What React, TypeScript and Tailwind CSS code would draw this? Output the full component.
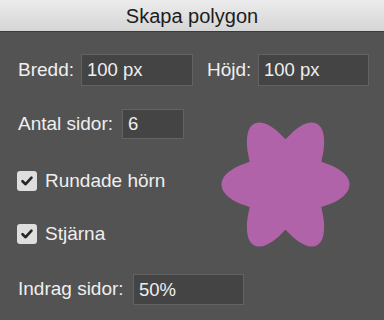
import React from 'react';

const font = { fontFamily: '"Liberation Sans", Arial, sans-serif' };

function Field({ value, className }: { value: string; className: string }) {
  return (
    <div
      className={`flex items-center bg-[#444444] border border-[#636363] pl-[5px] text-[18.5px] text-[#efefef] ${className}`}
    >
      {value}
    </div>
  );
}

function Check({ label }: { label: string }) {
  return (
    <div className="flex items-center h-[20px] ml-[-1px]">
      <div className="w-[20px] h-[20px] rounded-[3px] bg-[#dedede] flex items-center justify-center">
        <svg width="14" height="14" viewBox="0 0 14 14">
          <polyline points="2.5,7.2 5.6,10.2 11.5,3.6" fill="none" stroke="#262626" strokeWidth="2.6" strokeLinecap="round" strokeLinejoin="round" />
        </svg>
      </div>
      <span className="ml-[8px] text-[19px] text-[#efefef]">{label}</span>
    </div>
  );
}

// Rounded six-point star preview (three crossed petals)
function StarPreview() {
  return (
    <svg width="129" height="125" viewBox="-64.5 -57.2 129 114.4" preserveAspectRatio="none">
      <g fill="#b163a9">
        <ellipse cx="0" cy="0" rx="64" ry="25" />
        <ellipse cx="0" cy="0" rx="64" ry="25" transform="rotate(60)" />
        <ellipse cx="0" cy="0" rx="64" ry="25" transform="rotate(120)" />
      </g>
    </svg>
  );
}

export default function App() {
  return (
    <div className="w-[384px] h-[320px] bg-[#535353] overflow-hidden select-none" style={font}>
      {/* Title bar */}
      <div className="h-[32px] flex items-center justify-center bg-gradient-to-b from-[#ececec] to-[#d5d5d5] border-b border-[#3a3a3a]">
        <span className="text-[20px] text-[#1c1c1c]">Skapa polygon</span>
      </div>

      <div className="pl-[18px]">
        {/* Size row */}
        <div className="flex items-center h-[32px] mt-[22px]">
          <span className="w-[63px] text-[19px] text-[#efefef]">Bredd:</span>
          <Field value="100 px" className="w-[112px] h-[32px]" />
          <span className="ml-[14px] w-[51px] text-[19px] text-[#efefef]">Höjd:</span>
          <Field value="100 px" className="w-[111px] h-[32px]" />
        </div>

        <div className="flex">
          <div className="w-[203px] flex flex-col">
            <div className="flex items-center h-[30px] mt-[23px]">
              <span className="w-[104px] text-[19px] text-[#efefef]">Antal sidor:</span>
              <Field value="6" className="w-[62px] h-[30px]" />
            </div>
            <div className="mt-[32px]">
              <Check label="Rundade hörn" />
            </div>
            <div className="mt-[33px]">
              <Check label="Stjärna" />
            </div>
          </div>
          <div className="mt-[36px]">
            <StarPreview />
          </div>
        </div>

        <div className="flex items-center h-[31px] mt-[27px]">
          <span className="w-[115px] text-[19px] text-[#efefef]">Indrag sidor:</span>
          <Field value="50%" className="w-[111px] h-[31px]" />
        </div>
      </div>
    </div>
  );
}
